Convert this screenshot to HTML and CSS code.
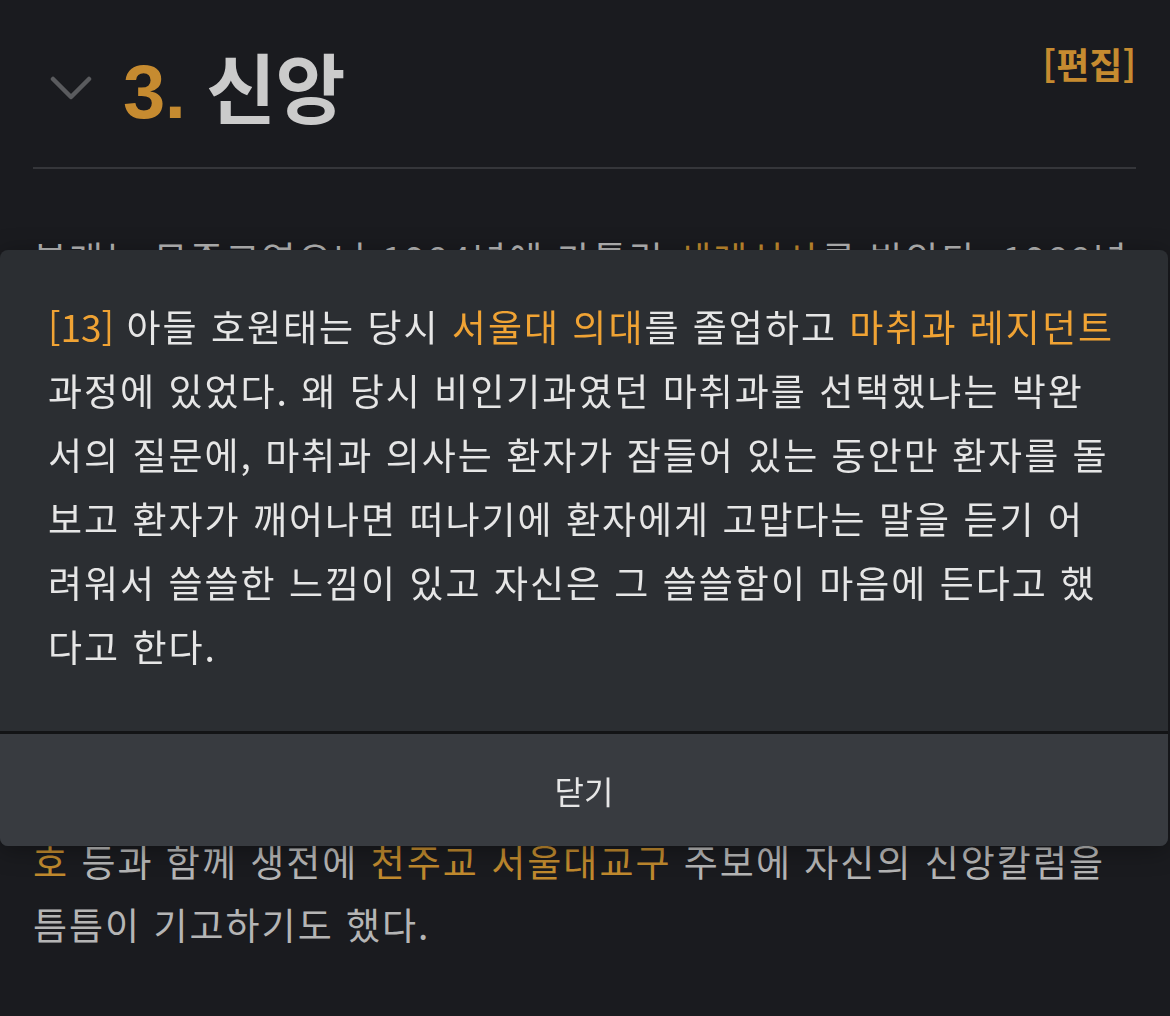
FILE: index.html
```html
<!DOCTYPE html>
<html lang="ko">
<head>
<meta charset="utf-8">
<title>3. 신앙</title>
<link rel="stylesheet" href="styles.css">
</head>
<body>
<main class="article">
  <div class="heading">
    <svg class="toggle" width="42" height="26" viewBox="0 0 42 26" aria-hidden="true">
      <polyline points="3,4 21,22 39,4" fill="none" stroke="#5a5b5e" stroke-width="4.5" stroke-linecap="round" stroke-linejoin="round"/>
    </svg>
    <h2 class="title"><span class="num">3.</span> <span class="name">신앙</span></h2>
    <a class="edit" href="#">[편집]</a>
  </div>
  <p class="text first">본래는 무종교였으나 1984년에 가톨릭 <a href="#">세례성사</a>를 받았다. 1988년 남편과 외아들을 잇달아 잃은 뒤 깊은 절망 속에서 신앙의 의미를 다시 묻게 되었고, 그 고통의 기록을 『한 말씀만 하소서』로 펴냈다. 이후 수도원에 머물며 마음을 추스르기도 했다. 이러한 체험은 이후 그의 작품 세계에도 깊은 영향을 주었으며, 죽음과 상실, 용서와 화해를 다룬 여러 산문과 소설 속에 자연스럽게 녹아들었다. 만년에는 경기도 구리시 아치울 마을에 살면서 집 근처의 작은 성당에 다니며 신앙생활을 꾸준히 이어 갔다.</p>
  <p class="text second">신앙 안에서 교분을 쌓은 김수환 추기경, 이해인 수녀, 정채봉, <a href="#">최인호</a> 등과 함께 생전에 <a href="#">천주교 서울대교구</a> 주보에 자신의 신앙칼럼을 틈틈이 기고하기도 했다.</p>
</main>

<div class="popup" role="dialog">
  <div class="popup-body">
    <a class="ref" href="#">[13]</a> 아들 호원태는 당시 <a href="#">서울대 의대</a>를 졸업하고 <a href="#">마취과 레지던트</a> 과정에 있었다. 왜 당시 비인기과였던 마취과를 선택했냐는 박완서의 질문에, 마취과 의사는 환자가 잠들어 있는 동안만 환자를 돌보고 환자가 깨어나면 떠나기에 환자에게 고맙다는 말을 듣기 어려워서 쓸쓸한 느낌이 있고 자신은 그 쓸쓸함이 마음에 든다고 했다고 한다.
  </div>
  <button class="popup-close" type="button">닫기</button>
</div>
</body>
</html>
```

FILE: styles.css
```css
html, body {
  margin: 0;
  padding: 0;
}

body {
  background: #1a1b1f;
  font-family: "Noto Sans CJK KR", "Noto Sans", sans-serif;
  width: 1170px;
  height: 1016px;
  overflow: hidden;
}

a {
  text-decoration: none;
}

.article {
  padding: 0 34px 0 33px;
}

.heading {
  display: flex;
  align-items: flex-start;
  height: 169px;
  box-sizing: border-box;
  border-bottom: 2px solid #35363a;
}

.toggle {
  margin: 75px 0 0 17px;
  flex: none;
}

.title {
  margin: 35px 0 0 31px;
  font-family: "Liberation Sans", "Noto Sans CJK KR", sans-serif;
  font-size: 76px;
  font-weight: 700;
  line-height: 100px;
  letter-spacing: -0.5px;
}

.title .num {
  color: #c68b30;
}

.title .name {
  font-family: "Noto Sans CJK KR", sans-serif;
  color: #cbcbcb;
}

.edit {
  margin: 33px 0 0 auto;
  font-size: 36px;
  font-weight: 700;
  line-height: 60px;
  color: #c68b30;
}

.text {
  margin: 0;
  font-size: 37px;
  line-height: 63px;
  letter-spacing: 2px;
  color: #b5b5b5;
}

.text a {
  color: #c08a2e;
}

.text.first {
  margin-top: 58px;
}

.text.second {
  margin-top: 36px;
}

.popup {
  position: fixed;
  left: 0;
  top: 250px;
  width: 1168px;
  border-radius: 8px;
  overflow: hidden;
  background: #2b2e32;
  box-shadow: 0 4px 24px rgba(0, 0, 0, 0.35);
}

.popup-body {
  padding: 44px 49px 53px 48px;
  font-size: 37px;
  line-height: 64px;
  letter-spacing: 2px;
  color: #e6e6e6;
}

.popup-body a {
  color: #f0a334;
}

.popup-body .ref {
  letter-spacing: 0;
}

.popup-close {
  display: flex;
  align-items: center;
  justify-content: center;
  box-sizing: border-box;
  width: 100%;
  height: 115px;
  margin: 0;
  padding: 0;
  border: 0;
  border-top: 3px solid #131416;
  background: #383b40;
  font-family: "Noto Sans CJK KR", sans-serif;
  font-size: 32px;
  color: #e6e6e6;
}
```
